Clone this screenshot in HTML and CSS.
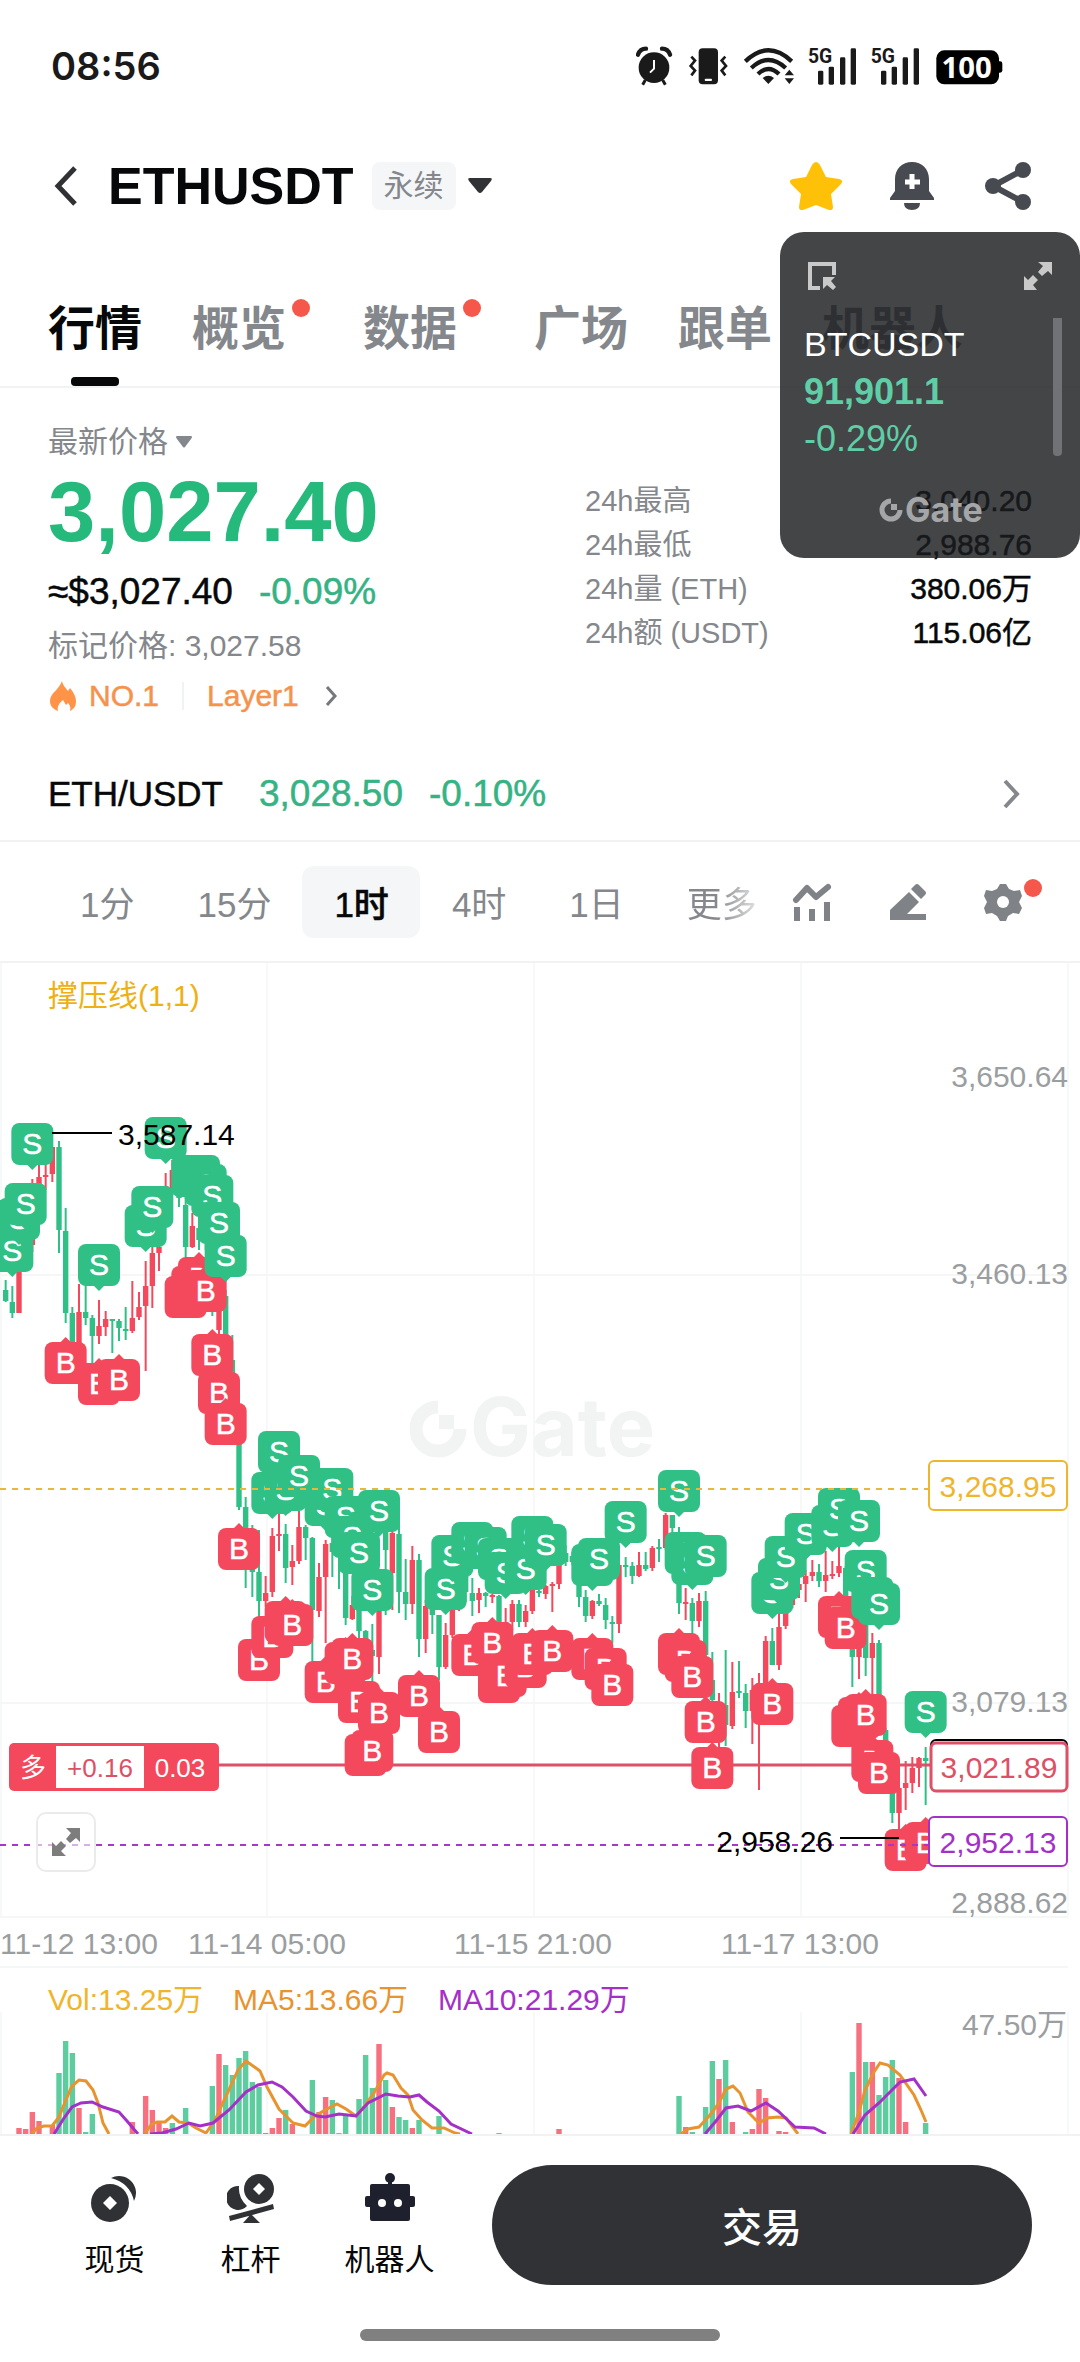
FILE: index.html
```html
<!DOCTYPE html>
<html lang="zh-CN">
<head>
  <meta charset="UTF-8">
  <meta name="viewport" content="width=device-width, initial-scale=1.0">
  <title>ETHUSDT 永续</title>
  <link rel="stylesheet" href="styles.css">
</head>
<body>
  <div class="status-bar">
    <span class="time">08:56</span>
    <svg class="status-icons" viewBox="0 0 1101 120" aria-hidden="true">
      <!-- alarm -->
      <g fill="#1a1a1a" stroke="#1a1a1a">
        <circle cx="54" cy="65" r="46" stroke="none"/>
        <path d="M6 26Q12 8 30 8M102 26Q96 8 78 8" fill="none" stroke-width="13" stroke-linecap="round"/>
        <path d="M28 102l-8 14M80 102l8 14" stroke-width="9"/>
        <path d="M54 42v26l-12 12" fill="none" stroke="#fff" stroke-width="6"/>
      </g>
      <!-- vibrate -->
      <g fill="none" stroke="#1a1a1a" stroke-width="8">
        <rect x="188" y="7" width="58" height="108" rx="12" fill="#1a1a1a" stroke="none"/>
        <rect x="206" y="98" width="22" height="7" rx="3" fill="#fff" stroke="none"/>
        <path d="M166 32l11 12-13 16 13 14-11 14M268 32l-11 12 13 16-13 14 11 14"/>
      </g>
      <!-- wifi -->
      <g fill="none" stroke="#1a1a1a" stroke-width="13">
        <path d="M328 46Q397-20 467 46M346 66Q397 18 449 66M366 84Q397 54 429 84"/>
        <path d="M380 96q17-14 34 0l-17 18zM446 88h28l-14-17zM446 97h28l-14 17z" fill="#1a1a1a" stroke="none"/>
      </g>
      <!-- signal -->
      <g fill="#1a1a1a">
        <text class="sig-text" x="516" y="51">5G</text>
        <rect x="546" y="74" width="16" height="42" rx="4"/><rect x="578" y="62" width="16" height="54" rx="4"/>
        <rect x="612" y="34" width="16" height="82" rx="4"/><rect x="644" y="7" width="16" height="109" rx="4"/>
        <text class="sig-text" x="704" y="51">5G</text>
        <rect x="735" y="74" width="16" height="42" rx="4"/><rect x="767" y="62" width="16" height="54" rx="4"/>
        <rect x="800" y="34" width="16" height="82" rx="4"/><rect x="833" y="7" width="16" height="109" rx="4"/>
      </g>
      <!-- battery -->
      <rect x="901" y="13" width="188" height="102" rx="24"/>
      <rect x="1080" y="46" width="19" height="34" rx="7"/>
      <text class="battery-text" x="992" y="96">100</text>
    </svg>
  </div>

  <header class="header">
    <button class="icon-btn back" aria-label="返回">
      <svg width="24" height="42" viewBox="0 0 24 42"><path d="M21 3L4 21l17 18" fill="none" stroke="#303236" stroke-width="5"/></svg>
    </button>
    <h1>ETHUSDT</h1>
    <button class="contract"><span class="tag">永续</span>
      <svg width="24" height="16" viewBox="0 0 24 16"><path d="M2 0h20q3 0 1 3L14 14q-2 2-4 0L1 3Q-1 0 2 0z" fill="#303236"/></svg>
    </button>
    <div class="header-actions">
      <button class="icon-btn" aria-label="收藏">
        <svg width="52" height="48" viewBox="0 0 52 48"><path d="M22 3q4-6 8 0l6 12 13 2q5 1 2 5l-10 10 2 13q0 4-4 3l-13-5-13 5q-4 1-4-3l2-13L1 22q-3-4 2-5l13-2z" fill="#ffc107"/></svg>
      </button>
      <button class="icon-btn" aria-label="价格提醒">
        <svg width="44" height="48" viewBox="0 0 44 48"><path d="M22 0C12 0 5 7 5 17v12L0 36v2h44v-2l-5-7V17C39 7 32 0 22 0zM14 41h16q0 7-8 7t-8-7z" fill="#484a52"/><path d="M22 12v15M15 20h15" stroke="#fff" stroke-width="5"/></svg>
      </button>
      <button class="icon-btn" aria-label="分享">
        <svg width="46" height="48" viewBox="0 0 46 48"><path d="M38 8L8 24l30 16" fill="none" stroke="#484a52" stroke-width="6"/><g fill="#484a52"><circle cx="38" cy="8" r="8"/><circle cx="8" cy="24" r="8"/><circle cx="38" cy="40" r="8"/></g></svg>
      </button>
    </div>
  </header>

  <nav class="tabs">
    <button class="tab active">行情</button>
    <button class="tab has-dot">概览</button>
    <button class="tab has-dot">数据</button>
    <button class="tab">广场</button>
    <button class="tab">跟单</button>
    <button class="tab">机器人</button>
  </nav>

  <section class="summary">
    <div class="price-col">
      <button class="price-type">最新价格
        <svg width="16" height="12" viewBox="0 0 16 12"><path d="M1 0h14q2 0 0 3l-6 8q-1 1-2 0L1 3q-2-3 0-3z" fill="#84878b"/></svg>
      </button>
      <div class="price">3,027.40</div>
      <div class="converted"><span>≈$3,027.40</span><span class="green">-0.09%</span></div>
      <div class="mark">标记价格: 3,027.58</div>
      <div class="badges">
        <svg width="26" height="30" viewBox="0 0 26 30"><path d="M12 0c1 5 4 7 6 10l2-3c4 5 6 9 6 13 0 5-2 8-6 10 1-3 0-6-2-8l-2 2-3-5c-4 3-6 7-5 11-5-2-8-5-8-10C0 12 9 9 12 0z" fill="#ff9448"/></svg>
        <span>NO.1</span>
        <i class="divider"></i>
        <a href="#">Layer1</a>
        <svg class="more" width="14" height="22" viewBox="0 0 14 22"><path d="M3 2l8 9-8 9" fill="none" stroke="#75787c" stroke-width="3"/></svg>
      </div>
    </div>
    <dl class="stats">
      <div><dt>24h最高</dt><dd>3,040.20</dd></div>
      <div><dt>24h最低</dt><dd>2,988.76</dd></div>
      <div><dt>24h量 (ETH)</dt><dd>380.06万</dd></div>
      <div><dt>24h额 (USDT)</dt><dd>115.06亿</dd></div>
    </dl>
  </section>

  <a class="spot-row" href="#">
    <span class="pair">ETH/USDT</span>
    <span class="green">3,028.50</span>
    <span class="green">-0.10%</span>
    <svg width="18" height="30" viewBox="0 0 18 30"><path d="M3 2l12 13L3 28" fill="none" stroke="#84878b" stroke-width="4"/></svg>
  </a>

  <div class="intervals">
    <button>1分</button>
    <button>15分</button>
    <button class="active">1时</button>
    <button>4时</button>
    <button>1日</button>
    <button class="fade">更多</button>
    <div class="tools">
      <button class="icon-btn" aria-label="指标">
        <svg width="40" height="38" viewBox="0 0 40 38"><path d="M4 17l11-12 9 9L36 4" fill="none" stroke="#7f8286" stroke-width="6" stroke-linecap="round" stroke-linejoin="round"/><path d="M5 24v14M20 26v12M35 19v19" stroke="#7f8286" stroke-width="6"/></svg>
      </button>
      <button class="icon-btn" aria-label="画线">
        <svg width="38" height="36" viewBox="0 0 38 36"><path d="M26 1q2-2 4 0l6 6q2 2 0 4l-4 4-10-10zM20 8l10 10-12 12h19v6H1V26z" fill="#7f8286"/></svg>
      </button>
      <button class="icon-btn has-dot" aria-label="设置">
        <svg width="38" height="38" viewBox="0 0 38 38"><path d="M16 1h6l3 5 5 2 6-1 2 6-3 6 3 6-3 6-6-1-5 3-2 5h-6l-3-5-5-3-6 1-2-6 3-6-3-6 2-6 6 1 5-2z" fill="#7f8286"/><circle cx="19" cy="19" r="6" fill="#fff"/></svg>
      </button>
    </div>
  </div>

  <div class="chart">
    <svg id="chart" viewBox="0 963 1080 1171" role="img" aria-label="ETHUSDT 1时 K线图"></svg>
    <button class="fullscreen" aria-label="全屏">
      <svg width="28" height="28" viewBox="0 0 28 28"><path d="M14 0h14v14l-4-4-6 5-4-4 5-6zM0 14l4 4 5-5 5 5-5 5 5 5H0z" fill="#7d7d7d"/></svg>
    </button>
  </div>

  <footer class="bottom-nav">
    <button class="nav-item">
      <svg width="48" height="50" viewBox="0 0 48 50"><path d="M20 5A17 17 0 0 1 43 28Q39 10 20 5z" fill="#2f3134"/><circle cx="19" cy="30" r="19" fill="#2f3134"/><path d="M19 23l7 7-7 7-7-7z" fill="#fff"/></svg>
      现货
    </button>
    <button class="nav-item">
      <svg width="48" height="50" viewBox="0 0 48 50"><path d="M12 13A12 12 0 1 0 20 33Q11 25 12 13z" fill="#2f3134"/><circle cx="32" cy="16" r="15" fill="#2f3134"/><path d="M32 10l6 6-6 6-6-6z" fill="#fff"/><path d="M2 43l44-12 1 5L3 48zM24 41l9 9H16z" fill="#2f3134"/></svg>
      杠杆
    </button>
    <button class="nav-item">
      <svg width="50" height="50" viewBox="0 0 50 50"><g fill="#1e202e"><circle cx="25" cy="5" r="5"/><path d="M23 6h4v8h-4z"/><rect x="5" y="11" width="40" height="37" rx="2"/><rect x="0" y="23" width="50" height="11" rx="2"/></g><circle cx="17" cy="30" r="4" fill="#fff"/><circle cx="33" cy="30" r="4" fill="#fff"/></svg>
      机器人
    </button>
    <button class="trade">交易</button>
  </footer>
  <div class="home-bar"></div>

  <aside class="float-card">
    <div class="float-top">
      <svg width="28" height="28" viewBox="0 0 28 28"><path d="M26 13V2H2v24h10" fill="none" stroke="#c9c9ca" stroke-width="4"/><path d="M15 15h12l-4 4 5 6-3 3-6-5-4 4z" fill="#c9c9ca"/></svg>
      <svg width="28" height="28" viewBox="0 0 28 28"><path d="M14 0h14v13l-4-4-6 5-4-4 5-6zM0 14l4 4 5-5 5 5-5 5 4 5H0z" fill="#c9c9ca"/></svg>
    </div>
    <div class="float-name">BTCUSDT</div>
    <div class="float-price">91,901.1</div>
    <div class="float-change">-0.29%</div>
    <div class="float-logo">
      <svg width="24" height="24" viewBox="0 0 24 24"><path d="M12 3a9 9 0 1 0 9 9" fill="none" stroke="#a5a6a7" stroke-width="5"/><path d="M12 6h6v6h-6z" fill="#a5a6a7"/></svg>
      Gate
    </div>
    <i class="float-scroll"></i>
  </aside>

  <script src="chart.js"></script>
</body>
</html>
```

FILE: styles.css
```css
* {
  box-sizing: border-box;
}
html, body {
  margin: 0;
  padding: 0;
  background: #fff;
  color: #060809;
  font-family: "Liberation Sans", "Noto Sans CJK SC", sans-serif;
  font-size: 30px;
}
body {
  position: relative;
}
button {
  border: 0;
  padding: 0;
  background: none;
  color: inherit;
  font: inherit;
}
a {
  color: inherit;
  text-decoration: none;
}
svg {
  display: block;
  flex: none;
}
.green {
  color: #35b384;
}

/* status bar */
.status-bar {
  display: flex;
  justify-content: space-between;
  align-items: center;
  height: 136px;
  padding: 0 77px 4px 51px;
}
.time {
  font: 600 38px Inter, sans-serif;
  color: #1a1a1a;
}
.status-icons {
  width: 367px;
  height: 40px;
}
.sig-text {
  font: 700 58px Roboto, sans-serif;
}
.battery-text {
  font: 700 88px "Open Sans", sans-serif;
  fill: #fff;
  text-anchor: middle;
}

/* header */
.header {
  display: flex;
  align-items: center;
  height: 100px;
  padding: 0 48px 0 54px;
}
h1 {
  margin: 0 18px 0 30px;
  font-size: 52px;
  line-height: 60px;
}
.contract {
  display: flex;
  align-items: center;
  gap: 12px;
}
.tag {
  padding: 0 12px;
  line-height: 48px;
  border-radius: 8px;
  background: #f4f6f8;
  color: #84878b;
}
.header-actions {
  display: flex;
  gap: 48px;
  margin-left: auto;
}
.header-actions .icon-btn {
  display: flex;
  justify-content: center;
  width: 48px;
}

/* tabs */
.tabs {
  display: flex;
  height: 152px;
  padding: 60px 48px 0;
  gap: 50px;
  border-bottom: 2px solid #f1f2f3;
  overflow: hidden;
}
.tab {
  position: relative;
  flex: none;
  height: 90px;
  padding-bottom: 24px;
  font-size: 47px;
  font-weight: 700;
  line-height: 66px;
  color: #84878b;
}
.tab.active {
  color: #060809;
}
.tab.active::after {
  content: "";
  position: absolute;
  left: 50%;
  bottom: 0;
  width: 48px;
  height: 9px;
  margin-left: -24px;
  border-radius: 4px;
  background: #060809;
}
.tab.has-dot {
  margin-right: 27px;
}
.has-dot {
  position: relative;
}
.has-dot::after {
  content: "";
  position: absolute;
  top: 3px;
  right: -24px;
  width: 18px;
  height: 18px;
  border-radius: 50%;
  background: #f5584a;
}

/* price summary */
.summary {
  display: flex;
  justify-content: space-between;
  padding: 32px 48px 24px;
}
.price-type {
  display: flex;
  align-items: center;
  gap: 8px;
  line-height: 44px;
  color: #84878b;
}
.price {
  font-size: 85px;
  font-weight: 700;
  line-height: 96px;
  color: #26b97c;
}
.converted {
  display: flex;
  gap: 26px;
  font-size: 37px;
  line-height: 64px;
}
.converted,
.spot-row,
.badges,
.stats dd {
  -webkit-text-stroke: 0.5px currentColor;
}
.mark {
  line-height: 44px;
  color: #84878b;
}
.badges {
  display: flex;
  align-items: center;
  height: 56px;
  padding-left: 2px;
  gap: 13px;
  color: #f5924c;
}
.divider {
  width: 2px;
  height: 28px;
  margin: 0 10px;
  background: #f1f2f3;
}
.badges .more {
  margin-left: 12px;
}
.stats {
  width: 447px;
  margin: 59px 0 0;
}
.stats div {
  display: flex;
  justify-content: space-between;
  line-height: 44px;
}
.stats dt {
  font-size: 29px;
  color: #84878b;
}
.stats dd {
  margin: 0;
}
.spot-row {
  display: flex;
  align-items: center;
  gap: 26px;
  height: 94px;
  padding: 0 60px 0 48px;
  border-bottom: 2px solid #f1f2f3;
  font-size: 37px;
}
.spot-row .pair {
  margin-right: 10px;
  font-size: 35px;
}
.spot-row svg {
  margin-left: auto;
}

/* interval switcher */
.intervals {
  display: flex;
  align-items: center;
  height: 121px;
  padding: 0 58px 0 48px;
  border-bottom: 2px solid #f1f2f3;
}
.intervals > button {
  flex: none;
  height: 72px;
  padding: 0 31px 0 32px;
  font-size: 35px;
  color: #84878b;
}
.intervals > .active {
  border-radius: 12px;
  background: #f4f6f8;
  color: #060809;
  font-weight: 500;
  -webkit-text-stroke: 0.5px currentColor;
}
.intervals > .fade {
  padding-right: 0;
  background: linear-gradient(90deg, #84878b 60%, #e0e1e2);
  background-clip: text;
  color: transparent;
}
.tools {
  display: flex;
  align-items: center;
  gap: 57px;
  margin-left: auto;
}
.tools .has-dot::after {
  top: -4px;
  right: -20px;
}

/* chart */
.chart {
  position: relative;
}
#chart {
  width: 100%;
  height: auto;
}
#chart text {
  font-size: 30px;
}
#chart .marker {
  fill: #fff;
  stroke: #fff;
  stroke-width: 0.5px;
  text-anchor: middle;
}
#chart .axis {
  fill: #9b9ea0;
}
#chart .end {
  text-anchor: end;
}
#chart .mid {
  text-anchor: middle;
}
#chart .small {
  font-size: 26px;
}
#chart .watermark {
  font: 700 81px Inter, sans-serif;
  fill: #f2f4f4;
}
.fullscreen {
  position: absolute;
  left: 36px;
  bottom: 262px;
  display: flex;
  align-items: center;
  justify-content: center;
  width: 60px;
  height: 60px;
  border: 2px solid #ebebeb;
  border-radius: 10px;
  background: rgba(255, 255, 255, 0.6);
}

/* bottom bar */
.bottom-nav {
  display: flex;
  align-items: center;
  height: 180px;
  padding: 0 48px;
  border-top: 2px solid #f1f2f3;
}
.nav-item {
  display: flex;
  flex-direction: column;
  align-items: center;
  flex: none;
  width: 139px;
  padding-top: 4px;
  gap: 15px;
  line-height: 44px;
}
.nav-item:first-child {
  width: 133px;
}
.trade {
  flex: 1;
  height: 120px;
  margin-left: 33px;
  border-radius: 60px;
  background: #313236;
  color: #fff;
  font-size: 40px;
  font-weight: 500;
}
.home-bar {
  width: 360px;
  height: 12px;
  margin: 15px auto 21px;
  border-radius: 6px;
  background: #808080;
}

/* floating ticker */
.float-card {
  position: absolute;
  top: 232px;
  right: 0;
  width: 300px;
  height: 326px;
  padding: 30px 28px 0 24px;
  border-radius: 24px;
  background: rgba(26, 28, 30, 0.82);
  color: #fff;
}
.float-top {
  display: flex;
  justify-content: space-between;
  padding-left: 4px;
  margin-bottom: 31px;
}
.float-name {
  font-size: 34px;
  line-height: 47px;
}
.float-price,
.float-change {
  font-size: 36px;
  line-height: 47px;
  color: #5fcea6;
}
.float-price {
  font-weight: 700;
}
.float-logo {
  display: flex;
  align-items: center;
  gap: 2px;
  margin: 28px 0 0 75px;
  font: 700 34px/40px Inter, sans-serif;
  color: #a5a6a7;
}
.float-scroll {
  position: absolute;
  top: 86px;
  right: 18px;
  width: 9px;
  height: 138px;
  border-radius: 0 0 4px 4px;
  background: #717275;
}
```

FILE: chart.js
```js
const GREEN = '#30c086';
const RED = '#f4495d';
const STEP = 20 / 3;
const BOTTOM = 2134;

// [color, high, body top, body bottom, low], one entry per hour
const candles = [
  ['g', 1280, 1290, 1301, 1302], ['g', 1286, 1302, 1313, 1318], ['r', 1230, 1240, 1313, 1313],
  ['g', 1200, 1205, 1230, 1240], ['r', 1179, 1190, 1245, 1252], ['r', 1160, 1177, 1200, 1210],
  ['r', 1160, 1175, 1177, 1190], ['r', 1147, 1147, 1174, 1182], ['g', 1141, 1147, 1230, 1253],
  ['g', 1208, 1231, 1313, 1323], ['g', 1307, 1313, 1347, 1350], ['r', 1284, 1312, 1347, 1350],
  ['g', 1280, 1312, 1318, 1325], ['g', 1315, 1318, 1336, 1363], ['r', 1300, 1326, 1336, 1344],
  ['r', 1311, 1319, 1327, 1336], ['g', 1319, 1319, 1320, 1353], ['g', 1319, 1321, 1328, 1341],
  ['g', 1307, 1329, 1330, 1340], ['r', 1281, 1318, 1331, 1333], ['r', 1292, 1307, 1317, 1320],
  ['r', 1261, 1286, 1306, 1371], ['r', 1247, 1253, 1286, 1308], ['r', 1240, 1247, 1253, 1271],
  ['r', 1173, 1186, 1200, 1210], ['r', 1160, 1170, 1190, 1195], ['g', 1165, 1175, 1198, 1207],
  ['g', 1190, 1205, 1247, 1260], ['r', 1213, 1226, 1247, 1248], ['g', 1225, 1228, 1240, 1250],
  ['g', 1225, 1228, 1240, 1250], ['g', 1240, 1250, 1310, 1316], ['r', 1290, 1300, 1330, 1335],
  ['g', 1290, 1296, 1335, 1350], ['g', 1335, 1360, 1400, 1410], ['g', 1430, 1440, 1507, 1510],
  ['g', 1497, 1507, 1540, 1588], ['g', 1525, 1535, 1572, 1597], ['g', 1530, 1572, 1601, 1623],
  ['r', 1576, 1593, 1601, 1607], ['r', 1528, 1536, 1592, 1597], ['r', 1513, 1534, 1536, 1551],
  ['g', 1524, 1534, 1568, 1583], ['r', 1545, 1561, 1567, 1585], ['r', 1511, 1527, 1561, 1564],
  ['g', 1525, 1527, 1538, 1560], ['g', 1537, 1538, 1610, 1662], ['r', 1563, 1577, 1611, 1617],
  ['r', 1540, 1544, 1577, 1643], ['g', 1530, 1543, 1552, 1577], ['g', 1530, 1550, 1556, 1589],
  ['g', 1550, 1556, 1618, 1625], ['r', 1596, 1605, 1619, 1620], ['g', 1600, 1603, 1631, 1638],
  ['g', 1630, 1631, 1640, 1645], ['g', 1624, 1650, 1656, 1682], ['r', 1605, 1610, 1657, 1674],
  ['g', 1530, 1532, 1550, 1615], ['r', 1530, 1533, 1573, 1610], ['g', 1518, 1534, 1592, 1613],
  ['g', 1559, 1592, 1604, 1620], ['r', 1546, 1560, 1604, 1614], ['g', 1554, 1560, 1639, 1657],
  ['r', 1600, 1606, 1639, 1653], ['g', 1605, 1608, 1615, 1634], ['g', 1615, 1615, 1667, 1680],
  ['r', 1623, 1635, 1667, 1669], ['r', 1600, 1605, 1635, 1638], ['r', 1590, 1595, 1605, 1611],
  ['g', 1560, 1570, 1592, 1602], ['g', 1578, 1593, 1601, 1616], ['r', 1588, 1593, 1600, 1613],
  ['g', 1592, 1593, 1596, 1607], ['r', 1594, 1595, 1597, 1603], ['g', 1595, 1596, 1622, 1625],
  ['r', 1608, 1622, 1625, 1630], ['r', 1600, 1604, 1622, 1630], ['g', 1600, 1604, 1622, 1627],
  ['r', 1605, 1611, 1622, 1627], ['r', 1588, 1590, 1611, 1614], ['g', 1590, 1591, 1592, 1597],
  ['r', 1585, 1586, 1594, 1599], ['r', 1582, 1584, 1586, 1612], ['r', 1560, 1565, 1584, 1589],
  ['g', 1545, 1553, 1562, 1566], ['g', 1552, 1556, 1562, 1565], ['g', 1580, 1583, 1597, 1607],
  ['g', 1590, 1597, 1616, 1622], ['r', 1600, 1601, 1616, 1619], ['g', 1594, 1601, 1604, 1606],
  ['g', 1598, 1605, 1620, 1629], ['g', 1616, 1622, 1624, 1643], ['r', 1560, 1565, 1624, 1633],
  ['g', 1557, 1565, 1567, 1577], ['g', 1562, 1566, 1576, 1584], ['r', 1552, 1565, 1576, 1577],
  ['g', 1552, 1565, 1569, 1571], ['r', 1546, 1548, 1568, 1571], ['g', 1539, 1547, 1548, 1562],
  ['r', 1513, 1515, 1548, 1550], ['g', 1515, 1515, 1528, 1537], ['g', 1527, 1535, 1603, 1614],
  ['r', 1588, 1602, 1604, 1620], ['g', 1598, 1603, 1621, 1635], ['r', 1593, 1601, 1621, 1627],
  ['g', 1591, 1601, 1655, 1670], ['g', 1652, 1680, 1700, 1710], ['r', 1693, 1705, 1730, 1747],
  ['g', 1650, 1705, 1725, 1746], ['r', 1662, 1692, 1726, 1729], ['g', 1661, 1691, 1693, 1698],
  ['g', 1684, 1693, 1711, 1728], ['r', 1678, 1690, 1711, 1744], ['r', 1673, 1683, 1700, 1790],
  ['r', 1636, 1641, 1683, 1690], ['g', 1628, 1641, 1665, 1665], ['r', 1610, 1627, 1665, 1670],
  ['r', 1605, 1610, 1626, 1629], ['r', 1585, 1590, 1605, 1608], ['r', 1580, 1584, 1590, 1598],
  ['r', 1570, 1576, 1584, 1602], ['r', 1560, 1572, 1576, 1581], ['g', 1564, 1572, 1581, 1587],
  ['r', 1551, 1575, 1581, 1592], ['r', 1561, 1574, 1575, 1579], ['r', 1547, 1566, 1573, 1577],
  ['g', 1566, 1568, 1600, 1610], ['g', 1620, 1630, 1657, 1687], ['r', 1630, 1640, 1657, 1679],
  ['g', 1620, 1625, 1658, 1676], ['r', 1633, 1643, 1658, 1697], ['g', 1640, 1643, 1700, 1710],
  ['g', 1728, 1730, 1745, 1760], ['g', 1770, 1790, 1813, 1823], ['r', 1780, 1788, 1813, 1830],
  ['r', 1761, 1783, 1788, 1810], ['r', 1757, 1768, 1783, 1793], ['r', 1757, 1758, 1768, 1787],
  ['g', 1747, 1758, 1761, 1805]
];

// [signal, candle index, top of the box]
const markers = [
  ['S', 0, 1200], ['S', 1, 1230], ['S', 2, 1198], ['S', 3, 1183], ['S', 4, 1123],
  ['B', 9, 1342], ['S', 14, 1244], ['B', 14, 1363], ['B', 17, 1359], ['S', 21, 1205],
  ['S', 22, 1186], ['S', 24, 1117], ['B', 27, 1276], ['S', 28, 1155], ['B', 28, 1266],
  ['S', 29, 1155], ['B', 29, 1257], ['S', 30, 1164], ['B', 30, 1270], ['S', 31, 1175],
  ['B', 31, 1334], ['S', 32, 1202], ['B', 32, 1372], ['S', 33, 1235], ['B', 33, 1403],
  ['B', 35, 1528], ['B', 38, 1639], ['S', 40, 1472], ['B', 40, 1616], ['S', 41, 1431],
  ['S', 42, 1469], ['B', 42, 1601], ['B', 43, 1604], ['S', 44, 1455], ['S', 48, 1484],
  ['B', 48, 1661], ['S', 49, 1468], ['S', 51, 1496], ['B', 51, 1642], ['S', 52, 1516],
  ['B', 52, 1638], ['S', 53, 1532], ['B', 53, 1681], ['B', 54, 1734], ['S', 55, 1569],
  ['S', 56, 1490], ['B', 56, 1692], ['B', 55, 1730], ['B', 62, 1675], ['B', 65, 1711],
  ['S', 66, 1568], ['S', 67, 1535], ['S', 70, 1522], ['B', 70, 1634], ['S', 72, 1527],
  ['B', 74, 1661], ['B', 73, 1622], ['S', 74, 1538], ['S', 75, 1552], ['B', 75, 1655],
  ['S', 79, 1516], ['S', 78, 1548], ['B', 78, 1646], ['B', 79, 1633], ['S', 81, 1524],
  ['B', 82, 1630], ['S', 88, 1544], ['B', 88, 1638], ['S', 89, 1538], ['B', 90, 1648],
  ['B', 91, 1664], ['S', 93, 1501], ['S', 101, 1470], ['B', 101, 1633], ['S', 102, 1532],
  ['B', 102, 1640], ['S', 103, 1543], ['B', 103, 1656], ['S', 105, 1535], ['B', 105, 1701],
  ['B', 106, 1747], ['S', 115, 1572], ['B', 115, 1683], ['S', 116, 1558], ['S', 117, 1536],
  ['S', 120, 1513], ['S', 124, 1505], ['S', 125, 1488], ['B', 125, 1596], ['B', 126, 1607],
  ['B', 127, 1705], ['S', 128, 1500], ['B', 128, 1697], ['S', 129, 1550], ['B', 129, 1694],
  ['S', 130, 1577], ['B', 130, 1740], ['S', 131, 1583], ['B', 131, 1752], ['B', 135, 1829],
  ['B', 138, 1822], ['S', 138, 1691]
];

// [color, candle index, bar height]
const volumes = [
  ['r', 2, 6], ['r', 3, 5], ['r', 4, 22], ['r', 5, 13], ['r', 7, 9], ['g', 8, 61], ['g', 9, 93],
  ['g', 10, 81], ['r', 11, 26], ['g', 12, 2], ['g', 13, 20], ['r', 19, 12], ['r', 21, 38],
  ['r', 22, 24], ['r', 23, 12], ['r', 24, 6], ['g', 25, 11], ['g', 27, 26], ['g', 31, 48],
  ['r', 32, 80], ['g', 33, 69], ['g', 34, 59], ['g', 35, 76], ['g', 36, 83], ['g', 37, 52],
  ['g', 38, 47], ['r', 39, 1], ['r', 40, 6], ['r', 41, 16], ['g', 42, 24], ['r', 43, 10],
  ['g', 46, 54], ['r', 47, 22], ['r', 48, 37], ['g', 49, 34], ['g', 50, 1], ['g', 51, 19],
  ['g', 53, 35], ['g', 54, 79], ['g', 55, 46], ['r', 56, 90], ['g', 57, 54], ['r', 58, 27],
  ['g', 59, 17], ['g', 60, 14], ['r', 61, 6], ['g', 62, 14], ['g', 65, 18], ['g', 74, 1],
  ['r', 83, 5], ['g', 101, 38], ['r', 102, 7], ['g', 103, 2], ['g', 105, 27], ['g', 106, 73],
  ['r', 107, 55], ['g', 108, 74], ['r', 109, 12], ['g', 111, 2], ['r', 112, 5], ['r', 113, 45],
  ['r', 114, 36], ['r', 116, 3], ['r', 117, 2], ['g', 127, 62], ['r', 128, 111], ['g', 129, 72],
  ['r', 130, 72], ['g', 131, 39], ['g', 132, 57], ['g', 133, 74], ['r', 134, 56], ['r', 135, 12],
  ['g', 138, 11]
];

const ma5 = [
  '32,2134 37,2128 44,2126 52,2126 59,2117 65,2102 72,2086 79,2080 86,2081 93,2090 98,2103 103,2123 109,2134',
  '145,2133 151,2125 157,2122 165,2122 172,2116 179,2122 188,2123 196,2128 206,2133 215,2120 226,2096 238,2070 246,2061 260,2071 267,2087 279,2109 293,2123 305,2126 315,2116 325,2110 337,2104 346,2109 356,2116 363,2108 374,2093 384,2075 387,2073 393,2075 401,2088 408,2095 413,2110 422,2120 432,2128 444,2128 455,2133 460,2134',
  '681,2134 688,2129 699,2127 710,2115 719,2103 726,2089 733,2086 740,2093 748,2112 759,2123 767,2118 778,2117 786,2118 798,2134',
  '851,2134 859,2112 865,2090 874,2072 880,2063 888,2065 900,2075 914,2095 921,2110 926,2122'
];
const ma10 = [
  '54,2134 64,2118 72,2107 81,2103 92,2102 103,2107 119,2112 127,2121 138,2134',
  '150,2134 162,2133 176,2129 189,2123 200,2126 213,2123 229,2110 246,2092 258,2085 272,2082 282,2087 293,2097 306,2111 317,2116 325,2117 339,2114 356,2116 368,2103 386,2094 398,2096 410,2097 419,2095 427,2102 439,2111 451,2124 472,2134',
  '705,2134 716,2121 726,2108 738,2106 751,2111 766,2103 778,2111 795,2127 814,2128 826,2134',
  '853,2134 865,2115 879,2103 900,2082 914,2079 926,2096'
];

const color = c => (c === 'g' ? GREEN : RED);
const xOf = i => 17 / 3 + STEP * i;
const rect = (x, y, w, h, attrs) => `<rect x="${x}" y="${y}" width="${w}" height="${h}" ${attrs}/>`;
const line = (x1, y1, x2, y2, attrs) => `<line x1="${x1}" y1="${y1}" x2="${x2}" y2="${y2}" ${attrs}/>`;
const text = (x, y, str, cls, fill) =>
  `<text x="${x}" y="${y}" class="${cls}"${fill ? ` fill="${fill}"` : ''}>${str}</text>`;

function drawGrid() {
  let s = '';
  [1, 267, 534, 801, 1068].forEach(x => {
    s += line(x, 963, x, 1917, 'stroke="#f7f8f8" stroke-width="2"');
    s += line(x, 2012, x, BOTTOM, 'stroke="#f7f8f8" stroke-width="2"');
  });
  [1275, 1703, 1917, 1967].forEach(y => {
    s += line(0, y, 1068, y, 'stroke="#f5f6f6" stroke-width="2"');
  });
  // watermark
  s += '<path d="M438 1407a22 22 0 1 0 22 22" fill="none" stroke="#f2f4f4" stroke-width="13"/>';
  s += rect(439, 1415, 15, 14, 'fill="#f2f4f4"');
  s += text(470, 1456, 'Gate', 'watermark');
  return s;
}

function drawCandles() {
  return candles.map(([c, high, top, bottom, low], i) => {
    const x = xOf(i);
    return rect(x - 1, high, 2, low - high, `fill="${color(c)}"`) +
      rect(x - 2.7, top, 5.4, Math.max(bottom - top, 2), `fill="${color(c)}"`);
  }).join('');
}

function drawMarkers() {
  return markers.map(([type, i, top]) => {
    const x = xOf(i);
    const fill = type === 'S' ? GREEN : RED;
    const tip = type === 'S'
      ? `M${x - 6} ${top + 41}h12l-6 6z`
      : `M${x - 6} ${top + 1}h12l-6 -6z`;
    return rect(x - 21, top, 42, 42, `rx="8" fill="${fill}"`) +
      `<path d="${tip}" fill="${fill}"/>` + text(x, top + 31, type, 'marker');
  }).join('');
}

function priceBox(x, y, h, str, stroke, w) {
  return rect(x, y, 1067 - x, h, `rx="5" fill="#fff" stroke="${stroke}" stroke-width="${w}"`) +
    text(x + (1067 - x) / 2, y + h / 2 + 11, str, 'mid', stroke);
}

function drawLabels() {
  let s = '';
  s += line(0, 1489, 928, 1489, 'stroke="#e8b73c" stroke-width="2" stroke-dasharray="6 6"');
  s += line(0, 1845, 928, 1845, 'stroke="#a836c8" stroke-width="2" stroke-dasharray="6 6"');
  s += line(52, 1133, 112, 1133, 'stroke="#000" stroke-width="2"');
  s += text(118, 1145, '3,587.14', '');
  s += line(840, 1838, 899, 1838, 'stroke="#000" stroke-width="2"');
  s += text(833, 1852, '2,958.26', 'end');

  s += text(1068, 1087, '3,650.64', 'axis end');
  s += text(1068, 1284, '3,460.13', 'axis end');
  s += text(1068, 1712, '3,079.13', 'axis end');
  s += text(1068, 1913, '2,888.62', 'axis end');
  s += priceBox(929, 1461, 49, '3,268.95', '#efb52c', 2);
  s += rect(931, 1740, 136, 48, 'rx="5" fill="#fff" stroke="#000" stroke-width="2"');
  s += priceBox(931, 1743, 48, '3,021.89', '#dd5066', 3);
  s += priceBox(929, 1817, 49, '2,952.13', '#a430c8', 2);

  // open position
  s += rect(9, 1743, 210, 48, `rx="5" fill="${RED}"`);
  s += rect(56, 1746, 88, 42, 'fill="#fff"');
  s += text(33, 1777, '多', 'small mid', '#fff');
  s += text(100, 1777, '+0.16', 'small mid', '#dd5066');
  s += text(180, 1777, '0.03', 'small mid', '#fff');

  s += text(48, 1006, '撑压线(1,1)', '', '#efb014');
  s += text(0, 1954, '11-12 13:00', 'axis');
  s += text(267, 1954, '11-14 05:00', 'axis mid');
  s += text(533, 1954, '11-15 21:00', 'axis mid');
  s += text(800, 1954, '11-17 13:00', 'axis mid');
  s += text(48, 2010, 'Vol:13.25万', '', '#efb52c');
  s += text(233, 2010, 'MA5:13.66万', '', '#e8932e');
  s += text(438, 2010, 'MA10:21.29万', '', '#a430c8');
  s += text(1067, 2035, '47.50万', 'axis end');
  return s;
}

function drawVolume() {
  let s = '<g opacity="0.78">';
  volumes.forEach(([c, i, h]) => {
    s += rect(xOf(i) - 2.7, BOTTOM - h, 5.4, h, `fill="${color(c)}"`);
  });
  s += '</g>';
  ma5.forEach(p => { s += `<polyline points="${p}" fill="none" stroke="#e8932e" stroke-width="3"/>`; });
  ma10.forEach(p => { s += `<polyline points="${p}" fill="none" stroke="#a430c8" stroke-width="3"/>`; });
  return s;
}

document.getElementById('chart').innerHTML =
  drawGrid() + drawCandles() +
  line(219, 1765, 931, 1765, 'stroke="#dd5066" stroke-width="3"') +
  drawMarkers() + drawLabels() + drawVolume();
```
